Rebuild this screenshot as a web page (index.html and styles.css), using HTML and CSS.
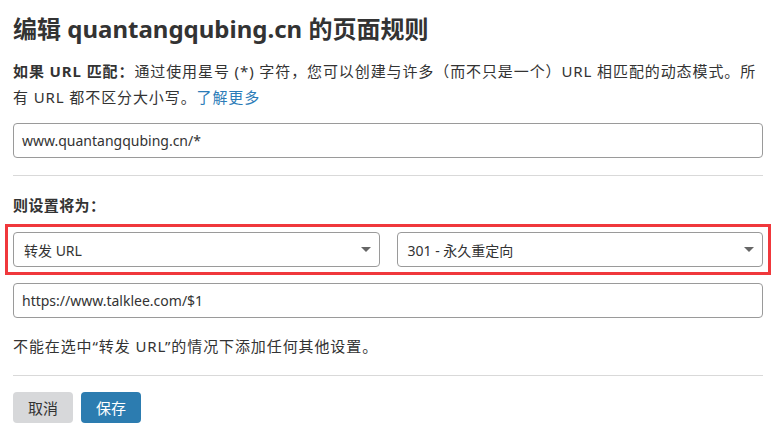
FILE: index.html
```html
<!DOCTYPE html>
<html lang="zh-CN">
<head>
<meta charset="utf-8">
<title>编辑页面规则</title>
<link rel="stylesheet" href="styles.css">
</head>
<body>
<main class="page">
  <h1 class="title">编辑 quantangqubing.cn 的页面规则</h1>
  <p class="desc"><strong class="desc-lead">如果 URL 匹配：</strong><span class="desc-text">通过使用星号 (*) 字符，您可以创建与许多（而不只是一个）URL 相匹配的动态模式。所</span><span class="desc-text">有 URL 都不区分大小写。</span><a class="link" href="#">了解更多</a></p>
  <div class="field">www.quantangqubing.cn/*</div>
  <hr class="divider">
  <div class="label">则设置将为：</div>
  <div class="select-row">
    <div class="select"><span>转发 URL</span><span class="caret"></span></div>
    <div class="select"><span>301 - 永久重定向</span><span class="caret"></span></div>
  </div>
  <div class="field">https://www.talklee.com/$1</div>
  <p class="note">不能在选中“转发 URL”的情况下添加任何其他设置。</p>
  <hr class="divider divider-bottom">
  <div class="actions">
    <button class="btn btn-cancel">取消</button>
    <button class="btn btn-save">保存</button>
  </div>
</main>
</body>
</html>
```
FILE: styles.css
```css
* { box-sizing: border-box; }
html, body { margin: 0; padding: 0; background: #fff; }
body {
  font-family: "Noto Sans", "Noto Sans CJK SC", sans-serif;
  color: #333;
  font-size: 15px;
}
.page {
  width: 784px;
  padding: 13px 21px 0 13px;
}
.title {
  margin: 0;
  font-size: 24px;
  line-height: 32px;
  font-weight: 700;
  color: #333;
}
.desc {
  margin: 13px 0 0;
  line-height: 26px;
  font-size: 15px;
  letter-spacing: 0.9px;
}
.desc-lead { font-weight: 700; }
.link { color: #2c7cb8; text-decoration: none; }
.field {
  margin-top: 13px;
  height: 35px;
  border: 1px solid #9a9a9a;
  border-radius: 4px;
  padding: 0 8px;
  display: flex;
  align-items: center;
  font-size: 14px;
  color: #333;
}
.divider {
  margin: 17px 0 0;
  border: 0;
  border-top: 1px solid #d9d9d9;
  height: 0;
}
.label {
  margin-top: 16px;
  line-height: 26px;
  font-weight: 700;
  font-size: 15px;
  letter-spacing: 0.4px;
}
.select-row {
  margin-top: 14px;
  display: grid;
  grid-template-columns: 1fr 1fr;
  column-gap: 17px;
  outline: 3px solid #f0383c;
  outline-offset: 5px;
}
.select {
  height: 35px;
  border: 1px solid #9a9a9a;
  border-radius: 4px;
  padding: 0 8px 0 10px;
  display: flex;
  align-items: center;
  justify-content: space-between;
  font-size: 14px;
}
.caret {
  width: 0;
  height: 0;
  border-left: 5px solid transparent;
  border-right: 5px solid transparent;
  border-top: 5px solid #666;
}
.select-row + .field { margin-top: 16px; }
.note {
  margin: 15px 0 0;
  line-height: 26px;
  font-size: 15px;
  letter-spacing: 0.9px;
}
.divider-bottom { margin-top: 16px; }
.actions {
  margin-top: 16px;
  display: flex;
  gap: 8px;
}
.btn {
  height: 31px;
  width: 60px;
  border: 0;
  border-radius: 4px;
  font-family: "Noto Sans", "Noto Sans CJK SC", sans-serif;
  font-size: 15px;
  padding: 0;
  cursor: pointer;
}
.btn-cancel { background: #d7d8da; color: #333; }
.btn-save { background: #2c7cb0; color: #fff; }
```
